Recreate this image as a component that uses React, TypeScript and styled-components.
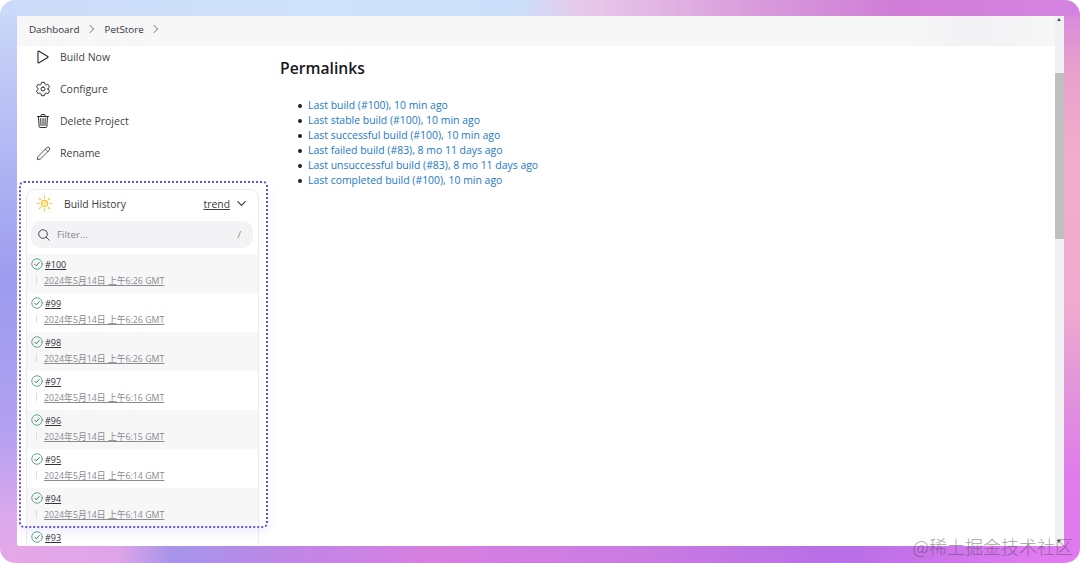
import styled, { createGlobalStyle } from "styled-components";
import {
  IoPlayOutline,
  IoSettingsOutline,
  IoTrashOutline,
  IoSearchOutline,
  IoChevronDownOutline,
} from "react-icons/io5";
import { Pencil } from "lucide-react";

const GlobalStyle = createGlobalStyle`
  html, body {
    margin: 0;
    padding: 0;
    background: #ffffff;
  }
  #root {
    width: 1080px;
    height: 563px;
  }
`;

// only the edges of the wallpaper show round the window, so each edge gets its own strip
const Frame = styled.div`
  position: relative;
  box-sizing: border-box;
  width: 1080px;
  height: 563px;
  padding: 16px 16px 17px 17px;
  border-radius: 15px;
  overflow: hidden;
  background:
    linear-gradient(90deg, #cbdaf8 0%, #cfe2fb 30%, #cbdffa 48%, #e8c8ea 54%, #d99bdc 70%, #cf7dd6 83%, #d484e0 100%) 0 0 / 100% 16px no-repeat,
    linear-gradient(90deg, #e4a8e8 0%, #dfa4e8 11%, #a594ea 16%, #c285e6 28%, #d67fe0 40%, #c97be2 60%, #b76ee6 78%, #e07af0 96%) 0 100% / 100% 18px no-repeat,
    linear-gradient(180deg, #cbdaf8 0%, #b0b6f4 28%, #9c9cf0 50%, #b2a0f2 76%, #dca8ec 92%, #e4a8e8 100%) 0 0 / 17px 100% no-repeat,
    linear-gradient(180deg, #d484e0 0%, #e8a0cc 12%, #f0aecb 28%, #f0aace 54%, #e090dc 72%, #e07cea 84%, #e07af0 100%) 100% 0 / 16px 100% no-repeat;
`;

const Window = styled.div`
  display: flex;
  height: 100%;
  background: #ffffff;
  border-radius: 3px;
  overflow: hidden;
`;

const Content = styled.div`
  display: flex;
  flex-direction: column;
  flex: 1;
  min-width: 0;
`;

const Breadcrumbs = styled.div`
  display: flex;
  align-items: center;
  box-sizing: border-box;
  flex: 0 0 30px;
  padding: 0 0 4px 12px;
  background: linear-gradient(90deg, #f7f7f8 0%, #f7f7f8 86%, #f2f2f4 92%, #f7f7f8 100%);
  font-family: "Open Sans", sans-serif;
  font-size: 9.8px;
  color: #333338;
`;

const Crumb = styled.span`
  display: inline-block;
`;

const CrumbArrow = styled.span`
  display: inline-block;
  width: 5px;
  height: 5px;
  margin: 0 12px 0 7px;
  border-top: 1px solid #9a9a9f;
  border-right: 1px solid #9a9a9f;
  transform: rotate(45deg);
`;

const Body = styled.div`
  display: flex;
  flex: 1;
  min-height: 0;
`;

const Sidebar = styled.div`
  position: relative;
  flex: 0 0 263px;
  display: flex;
  flex-direction: column;
  overflow: hidden;
`;

const Tasks = styled.div`
  display: flex;
  flex-direction: column;
  padding-left: 18px;
  flex: 0 0 143px;
`;

const Task = styled.div<{ $first?: boolean }>`
  display: flex;
  align-items: center;
  gap: 9px;
  height: 32px;
  margin-top: ${(p) => (p.$first ? "-5px" : "0")};
  font-family: "Open Sans", sans-serif;
  font-size: 10.5px;
  color: #3f3f44;
`;

const TaskIcon = styled.span`
  display: flex;
  align-items: center;
  justify-content: center;
  flex: 0 0 16px;
  min-width: 0;
  height: 18px;
  color: #2c2c30;

  svg {
    flex-shrink: 0;
  }
`;

const HistoryCard = styled.div`
  box-sizing: border-box;
  width: 233px;
  margin-left: 9px;
  flex: 1;
  border: 1px solid #ececf0;
  border-bottom: 0;
  border-radius: 9px 9px 0 0;
  font-family: "Open Sans", "Noto Sans CJK SC", sans-serif;
`;

const HistoryHeader = styled.div`
  display: flex;
  align-items: center;
  height: 27px;
  padding: 0 10px 0 9px;
  font-size: 10.4px;
  color: #3b3b40;
`;

const HistoryTitle = styled.span`
  margin-left: 11px;
  flex: 1;
`;

const Trend = styled.span`
  text-decoration: underline;
  margin-right: 5px;
`;

const FilterBox = styled.div`
  display: flex;
  align-items: center;
  height: 27px;
  margin: 4px 5px 6px 4px;
  padding: 0 12px 0 6px;
  border-radius: 10px;
  background: #f3f3f6;
  font-size: 9.8px;
  color: #85858a;
`;

const FilterText = styled.span`
  flex: 1;
  margin-left: 6px;
`;

const BuildRow = styled.div<{ $shaded: boolean }>`
  box-sizing: border-box;
  height: 39px;
  padding: 2px 0 0 4px;
  background: ${(p) => (p.$shaded ? "#f7f7f8" : "#ffffff")};
`;

const BuildTop = styled.div`
  display: flex;
  align-items: center;
  gap: 2px;
  height: 16px;
`;

const BuildNumber = styled.span`
  font-size: 9px;
  color: #333338;
  text-decoration: underline;
`;

const BuildBottom = styled.div`
  display: flex;
  align-items: center;
  height: 16px;
  padding-left: 5px;
`;

const Tick = styled.span`
  width: 1px;
  height: 8px;
  background: #dedede;
  margin-right: 7px;
`;

const BuildDate = styled.span`
  font-size: 8.8px;
  color: #8a8a8f;
  text-decoration: underline;
`;

const Highlight = styled.div`
  position: absolute;
  left: 2px;
  top: 135px;
  width: 249px;
  height: 347px;
  box-sizing: border-box;
  border: 2px dotted #6a52d4;
  border-radius: 5px;
  box-shadow: 0 4px 10px rgba(120, 100, 220, 0.12);
  pointer-events: none;
`;

const Main = styled.div`
  flex: 1;
  padding-top: 10px;
  font-family: "Open Sans", sans-serif;
`;

const Title = styled.h2`
  margin: 0 0 18px;
  font-size: 15.7px;
  line-height: 24px;
  font-weight: 600;
  color: #18181b;
`;

const LinkList = styled.ul`
  margin: 0;
  padding: 0 0 0 18px;
  list-style: none;
  font-size: 10.45px;
  line-height: 15px;
`;

const Permalink = styled.li`
  display: flex;
  align-items: center;
  gap: 6px;
  color: #1b78c9;

  &::before {
    content: "";
    width: 4px;
    height: 4px;
    border-radius: 50%;
    background: #222228;
  }
`;

const Scrollbar = styled.div`
  position: relative;
  flex: 0 0 9px;
  background: #f1f0f3;
`;

const ScrollThumb = styled.div`
  position: absolute;
  left: 0;
  right: 0;
  top: 57px;
  height: 166px;
  background: #c0bfc0;
`;

const ScrollArrow = styled.span<{ $down?: boolean }>`
  position: absolute;
  left: 2px;
  ${(p) => (p.$down ? "bottom: 3px;" : "top: 2px;")}
  border-left: 2.5px solid transparent;
  border-right: 2.5px solid transparent;
  ${(p) => (p.$down ? "border-top: 3px solid #505055;" : "border-bottom: 3px solid #505055;")}
`;

const Watermark = styled.div`
  position: absolute;
  right: 7px;
  bottom: 7px;
  font-family: "Noto Sans CJK SC", sans-serif;
  font-size: 18px;
  line-height: 20px;
  font-weight: 300;
  color: rgba(70, 60, 80, 0.5);
  white-space: nowrap;
`;

// the last row is cut off by the window right under its number
const builds = [
  { id: 100, time: "6:26" },
  { id: 99, time: "6:26" },
  { id: 98, time: "6:26" },
  { id: 97, time: "6:16" },
  { id: 96, time: "6:15" },
  { id: 95, time: "6:14" },
  { id: 94, time: "6:14" },
  { id: 93 },
];

const links = [
  "Last build (#100), 10 min ago",
  "Last stable build (#100), 10 min ago",
  "Last successful build (#100), 10 min ago",
  "Last failed build (#83), 8 mo 11 days ago",
  "Last unsuccessful build (#83), 8 mo 11 days ago",
  "Last completed build (#100), 10 min ago",
];

function SunIcon() {
  return (
    <svg width="17" height="17" viewBox="0 0 24 24" fill="none" stroke="#f2c84b" strokeWidth="1.6" strokeLinecap="round">
      <circle cx="12" cy="12" r="4.5" fill="#fbe9a8" />
      <path d="M12 1.5v3M12 19.5v3M1.5 12h3M19.5 12h3M4.6 4.6l2.1 2.1M17.3 17.3l2.1 2.1M4.6 19.4l2.1-2.1M17.3 6.7l2.1-2.1" />
    </svg>
  );
}

function StatusIcon() {
  return (
    <svg width="12" height="12" viewBox="0 0 24 24" fill="none" stroke="#46a57e" strokeWidth="1.8" strokeLinecap="round" strokeLinejoin="round">
      <circle cx="12" cy="12" r="10.5" />
      <path d="M7.5 12.5l3 3 6-6.5" stroke="#3d5a4c" />
    </svg>
  );
}

export default function App() {
  return (
    <>
      <GlobalStyle />
      <Frame>
        <Window>
          <Content>
            <Breadcrumbs>
              <Crumb>Dashboard</Crumb>
              <CrumbArrow />
              <Crumb>PetStore</Crumb>
              <CrumbArrow />
            </Breadcrumbs>
            <Body>
              <Sidebar>
                <Tasks>
                  <Task $first>
                    <TaskIcon>
                      <IoPlayOutline size={18} />
                    </TaskIcon>
                    Build Now
                  </Task>
                  <Task>
                    <TaskIcon>
                      <IoSettingsOutline size={16} />
                    </TaskIcon>
                    Configure
                  </Task>
                  <Task>
                    <TaskIcon>
                      <IoTrashOutline size={16} />
                    </TaskIcon>
                    Delete Project
                  </Task>
                  <Task>
                    <TaskIcon>
                      <Pencil size={15} strokeWidth={1.3} />
                    </TaskIcon>
                    Rename
                  </Task>
                </Tasks>
                <HistoryCard>
                  <HistoryHeader>
                    <SunIcon />
                    <HistoryTitle>Build History</HistoryTitle>
                    <Trend>trend</Trend>
                    <IoChevronDownOutline size={13} />
                  </HistoryHeader>
                  <FilterBox>
                    <IoSearchOutline size={14} color="#333338" />
                    <FilterText>Filter...</FilterText>/
                  </FilterBox>
                  {builds.map((b, i) => (
                    <BuildRow key={b.id} $shaded={i % 2 === 0}>
                      <BuildTop>
                        <StatusIcon />
                        <BuildNumber>#{b.id}</BuildNumber>
                      </BuildTop>
                      {b.time && (
                        <BuildBottom>
                          <Tick />
                          <BuildDate>2024年5月14日 上午{b.time} GMT</BuildDate>
                        </BuildBottom>
                      )}
                    </BuildRow>
                  ))}
                </HistoryCard>
                <Highlight />
              </Sidebar>
              <Main>
                <Title>Permalinks</Title>
                <LinkList>
                  {links.map((l) => (
                    <Permalink key={l}>{l}</Permalink>
                  ))}
                </LinkList>
              </Main>
            </Body>
          </Content>
          <Scrollbar>
            <ScrollArrow />
            <ScrollThumb />
            <ScrollArrow $down />
          </Scrollbar>
        </Window>
        <Watermark>@稀土掘金技术社区</Watermark>
      </Frame>
    </>
  );
}
